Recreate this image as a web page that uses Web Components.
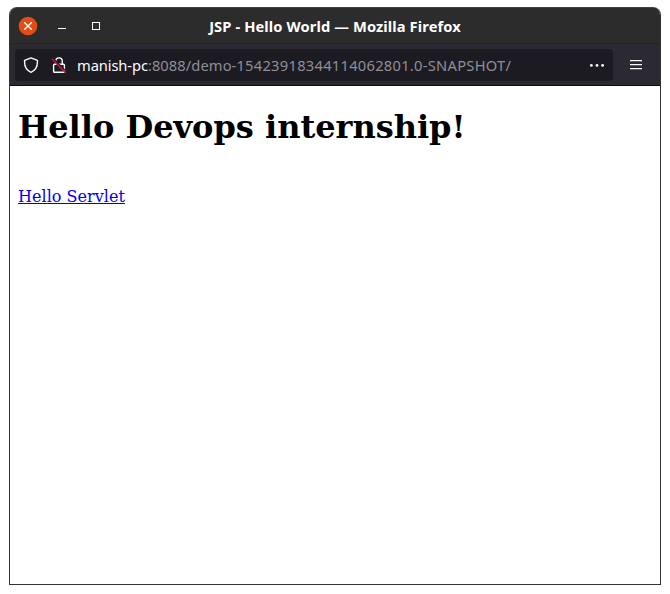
<!DOCTYPE html>
<html lang="en">
<head>
<meta charset="utf-8">
<title>JSP - Hello World</title>
<style>
html, body { margin: 0; background: #fff; }
body { width: 670px; height: 594px; overflow: hidden; }
</style>
</head>
<body>
<browser-window>
  <title-bar slot="title">JSP - Hello World — Mozilla Firefox</title-bar>
  <nav-bar slot="nav"><span slot="host">manish-pc</span><span slot="path">:8088/demo-</span><span slot="version">15423918344114062801.0-SNAPSHOT/</span></nav-bar>
  <hello-page></hello-page>
</browser-window>
<script>
const define = (name, html) => customElements.define(name, class extends HTMLElement {
  constructor() {
    super();
    this.attachShadow({ mode: 'open' }).innerHTML = html;
  }
});

define('browser-window', `
<style>
:host { display: flex; flex-direction: column; box-sizing: border-box; width: 652px; height: 578px; margin: 7px 0 0 9px;
  border: 1px solid #333; border-top: 0; border-radius: 8px 8px 0 0; overflow: hidden; background: #fff; }
main { flex: 1; overflow: hidden; }
</style>
<slot name="title"></slot><slot name="nav"></slot><main><slot></slot></main>`);

define('title-bar', `
<style>
:host { display: grid; grid-template-columns: 1fr auto 1fr; align-items: center; box-sizing: border-box; height: 37px; flex: none;
  margin: 0 -1px; padding: 1px 9px 0 9px; background: #2c2c2c; border-top: 1px solid #3f3f3f; border-bottom: 1px solid #242424;
  border-radius: 8px 8px 0 0; color: #fff; font: bold 14.7px/20px "Noto Sans", sans-serif; }
.label { white-space: nowrap; letter-spacing: .1px; }
svg { display: block; }
</style>
<svg width="90" height="20" viewBox="0 0 90 20">
  <circle cx="10" cy="10" r="9.3" fill="#e34b17"/>
  <path d="M6.2 6.2l7.6 7.6M13.8 6.2l-7.6 7.6" stroke="#fff" stroke-width="1.4"/>
  <path d="M40 12.5h8" stroke="#fff"/>
  <rect x="74.5" y="6.5" width="7" height="7" fill="none" stroke="#fff"/>
</svg>
<span class="label"><slot></slot></span><span></span>`);

define('nav-bar', `
<style>
:host { display: flex; align-items: center; box-sizing: border-box; height: 42px; flex: none; padding: 0 17px 0 5px;
  background: #2b2a33; border-bottom: 1px solid #0c0c0d; font: 14.7px/20px "Noto Sans", sans-serif; }
.field { display: flex; align-items: center; box-sizing: border-box; width: 598px; height: 32px; padding: 0 8px; border-radius: 4px; background: #1c1b22; }
.url { flex: 1; margin-left: 10px; white-space: nowrap; color: #8f8f96; }
.host { color: #fbfbfe; letter-spacing: -.1px; }
.path { letter-spacing: .08px; }
.version { letter-spacing: .27px; }
svg { display: block; flex: none; }
.lock { margin-left: 12px; }
.menu { margin-left: 17px; }
</style>
<div class="field">
  <svg width="16" height="16" viewBox="0 0 16 16" fill="none" stroke="#fbfbfe" stroke-width="1.4" stroke-linejoin="round"><path d="M8 .9L14.4 3.3C14.8 8.6 12.6 13.4 8 15.3C3.4 13.4 1.2 8.6 1.6 3.3Z"/></svg>
  <svg class="lock" width="16" height="16" viewBox="0 0 16 16" fill="none" stroke="#fbfbfe" stroke-width="1.4"><path d="M4.7 7V4.2a3.3 3.3 0 0 1 6.6 0V7M3.6 7.2h8.8a1 1 0 0 1 1 1v6a1 1 0 0 1-1 1H3.6a1 1 0 0 1-1-1v-6a1 1 0 0 1 1-1z"/><path d="M2 2.2l11.5 11.5" stroke="#1c1b22" stroke-width="2.6"/><path d="M1 2l13.8 13.8" stroke="#e2103f" stroke-width="1.3"/></svg>
  <span class="url"><span class="host"><slot name="host"></slot></span><span class="path"><slot name="path"></slot></span><span class="version"><slot name="version"></slot></span></span>
  <svg width="16" height="16" viewBox="0 0 16 16" fill="#fbfbfe"><circle cx="2.4" cy="8.4" r="1.4"/><circle cx="8" cy="8.4" r="1.4"/><circle cx="13.6" cy="8.4" r="1.4"/></svg>
</div>
<svg class="menu" width="12" height="13" viewBox="0 0 12 13" fill="#fbfbfe"><path d="M0 2h12v1.3H0zM0 6h12v1.3H0zM0 10h12v1.3H0z"/></svg>`);

define('hello-page', `
<style>
:host { display: block; padding: 0 8px; color: #000; font: 16px "DejaVu Serif", serif; }
h1 { margin: 0; padding: 22px 0 21px; font-size: 32px; line-height: 38px; }
a { display: block; width: max-content; margin-top: 20px; line-height: 19px; letter-spacing: .03px; color: #00e; text-decoration: underline; }
</style>
<h1>Hello Devops internship!</h1>
<a href="hello-servlet">Hello Servlet</a>`);
</script>
</body>
</html>
